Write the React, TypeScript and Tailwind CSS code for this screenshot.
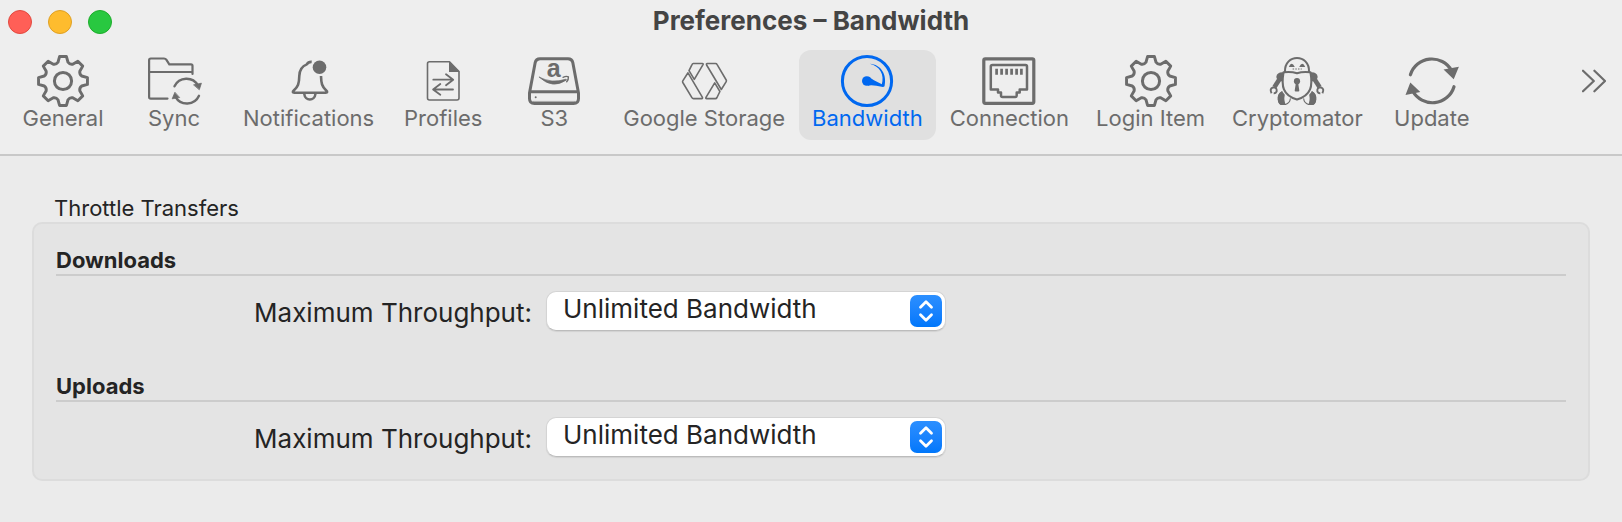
import React from "react";

type IconProps = { box: string; children: React.ReactNode };

function Icon({ box, children }: IconProps) {
  return (
    <svg
      viewBox={box}
      className="h-[54px] w-14"
      fill="none"
      stroke="currentColor"
      strokeWidth={2.6}
      strokeLinecap="round"
      strokeLinejoin="round"
      aria-hidden="true"
    >
      {children}
    </svg>
  );
}

function polar(radius: number, degrees: number) {
  const a = ((degrees - 90) * Math.PI) / 180;
  return `${(radius * Math.cos(a)).toFixed(2)} ${(radius * Math.sin(a)).toFixed(2)}`;
}

const gearPath =
  Array.from({ length: 8 }, (_, k) => {
    const a = k * 45;
    return `${k === 0 ? "M" : "L"}${polar(19.4, a - 15)} L${polar(24.7, a - 8)} L${polar(24.7, a + 8)} L${polar(19.4, a + 15)} Q${polar(17.6, a + 22.5)} ${polar(19.4, a + 30)}`;
  }).join(" ") + "Z";

const GearIcon = () => (
  <Icon box="-28 -27 56 54">
    <path d={gearPath} strokeWidth="2.9" />
    <circle r="8.6" strokeWidth="3" />
  </Icon>
);

const SyncIcon = () => (
  <Icon box="145.5 54 56 54">
    <path
      strokeWidth="2.2"
      d="M167 98.6H150.3Q148.6 98.6 148.6 97V60.2Q148.6 58.5 150.3 58.5H163.5Q165 58.5 165.8 59.7L168.8 64.3H190.5Q192 64.3 192 65.8V74M148.6 72H192"
    />
    <path strokeWidth="2.4" d="M174 86.3A13.2 13.2 0 0 1 197.5 85.5M198.5 95.8A13.2 13.2 0 0 1 175 96.8" />
    <path fill="currentColor" strokeWidth="0.8" d="M193.4 84.8L200.9 83.2L198.9 89.4ZM174.3 92.6L171.7 98.8L178.8 97.6Z" />
  </Icon>
);

const BellIcon = () => (
  <Icon box="280.5 54 56 54">
    <path
      strokeLinecap="butt"
      d="M311.2 61.9C308.5 61.7 307.2 62.8 306.3 64.4C301 66.4 299 70 298.8 76C298.6 84 297.5 86.5 293.5 90.2C291.8 91.8 292 92.7 293.8 92.7H325.2C327 92.7 327.2 91.8 325.5 90.2C321.5 86.5 320.7 83.5 320.5 76"
    />
    <path d="M303.8 94C304.5 101.4 314.2 101.4 314.9 94" />
    <circle cx="319" cy="67.3" r="6.8" fill="currentColor" stroke="none" />
  </Icon>
);

const ProfilesIcon = () => (
  <Icon box="416 54 56 54">
    <path strokeWidth="1.6" d="M450.5 61.7H430.5Q428.5 61.7 428.5 63.7V98Q428.5 100 430.5 100H458Q460 100 460 98V71.5Z" />
    <path fill="currentColor" stroke="none" d="M450 61.5V72H460.5Z" />
    <path strokeWidth="1.8" d="M434.3 79.7H454M447 74.3L454.2 79.7L447 85.3M454 89.5H434.3M441.3 84L434.1 89.5L441.3 94.8" />
  </Icon>
);

const DriveIcon = () => (
  <Icon box="527 54 56 54">
    <path
      strokeWidth="3"
      d="M536.2 62.5Q537 58.8 541 58.8H569Q573 58.8 573.8 62.5L579.5 93V98.5Q579.5 103.5 574.5 103.5H535.5Q530.5 103.5 530.5 98.5V93Z"
    />
    <path strokeWidth="3" d="M532 91.8H578" />
    <path strokeWidth="0.8" opacity="0.7" d="M534 101.4H576" />
    <circle cx="536.7" cy="97.3" r="1" fill="currentColor" stroke="none" />
    <text
      x="554.6"
      y="77"
      textAnchor="middle"
      fill="currentColor"
      stroke="none"
      className="font-['Liberation_Sans',sans-serif] text-[25px] font-bold"
    >
      a
    </text>
    <path fill="currentColor" strokeWidth="0.7" d="M540.3 77.2Q553.5 89.5 567 80.2Q568 79 566.5 79.3Q553 83.8 540.3 77.2Z" />
    <path strokeWidth="1.4" d="M564 77.3Q567.5 75.7 569.4 76.9Q569.7 79.4 567.7 81.8" />
  </Icon>
);

const GoogleStorageIcon = () => (
  <Icon box="677 54 56 54">
    <path
      strokeWidth="1.6"
      d="M694.2 63.5H703.4Q704.6 63.5 704 64.6L695.3 79.3L690 70.6L693 64.6Q693.5 63.5 694.2 63.5ZM689 72.8L703.3 97.2Q704 98.6 702.7 98.6H694.5Q693.5 98.6 692.9 97.6L683.8 82.5Q683.3 81.6 683.8 80.8ZM708.3 63.5H716.5Q717.5 63.5 718 64.4L727.2 80Q727.7 80.9 727.2 81.7L722.3 89.5L707.6 65Q707 63.5 708.3 63.5ZM715.7 82.9L720.9 91.5L718 97.5Q717.4 98.6 716.4 98.6H707.7Q706.3 98.6 707 97.4Z"
    />
  </Icon>
);

const GaugeIcon = () => (
  <Icon box="839.5 54 56 54">
    <circle cx="867.5" cy="81" r="24.6" strokeWidth="3" />
    <g fill="currentColor" stroke="none">
      <circle cx="867.3" cy="81" r="4.8" />
      <path d="M869.5 76.8Q872 79.3 884.4 85.3Q885.2 87.2 883.4 87.1Q873 84.6 868.3 85.7Z" />
      <path d="M870.3 63.8C881.5 64.5 887.8 74.5 885 86.6L882.2 84.9C885.2 74.5 880.5 66.5 870.3 63.8Z" />
    </g>
  </Icon>
);

const ConnectionIcon = () => (
  <Icon box="981 54 56 54">
    <rect x="983.8" y="58.8" width="50" height="44.5" rx="1.5" strokeWidth="3.2" />
    <path
      strokeWidth="2.5"
      d="M992.5 65H1025.5Q1027 65 1027 66.5V89.5H1019.7V92.6H1016.7V95.5Q1016.7 97 1015.2 97H1002.6Q1001 97 1001 95.5V92.6H998V89.5H990.8V66.5Q990.8 65 992.5 65Z"
    />
    <path strokeWidth="2.7" strokeLinecap="butt" d="M996.6 68.8V74.7M1001.6 68.8V74.7M1006.6 68.8V74.7M1011.6 68.8V74.7M1016.6 68.8V74.7M1021.4 68.8V74.7" />
  </Icon>
);

const RobotSide = () => (
  <g>
    <path fill="currentColor" stroke="none" d="M1283.5 72.5Q1276 71.5 1275.3 77L1276.5 80.5L1281.5 81.5Q1281.3 77 1283.5 72.5Z" />
    <path strokeWidth="4.6" strokeLinecap="butt" d="M1278.3 79.5L1273.5 87" />
    <path strokeWidth="1.9" strokeLinecap="butt" d="M1270.6 93.3Q1268.3 88.8 1272 87.3Q1276.3 87.3 1275.6 91.5Q1274.7 93.5 1272.7 93.3" />
    <path strokeWidth="1.1" d="M1281 91.8Q1276.7 94 1277.3 99.5Q1277.8 104.5 1281 104.5H1284.5Q1289 103 1289.3 98.8" />
    <path fill="currentColor" stroke="none" d="M1281 91.3Q1276.3 94 1276.8 100Q1277.4 105 1281 105H1285Q1282.5 101 1283.8 94.8Z" />
  </g>
);

const RobotIcon = () => (
  <Icon box="1268 54 56 54">
    <path strokeWidth="2.1" d="M1284 71.5C1283.5 53.5 1308.5 53.5 1308 71.5" />
    <path fill="currentColor" stroke="none" d="M1287.8 67Q1290.5 60.5 1293.8 67ZM1298.2 67Q1301.5 60.5 1304.2 67Z" />
    <path strokeWidth="1.2" strokeLinecap="butt" strokeDasharray="1.5 1.2" d="M1291.6 69H1300.8" />
    <path
      strokeWidth="2.1"
      d="M1282.5 72.3Q1290 71.3 1296 73.2Q1302 71.3 1309.5 72.3C1311.8 86 1310.5 95 1296 99.6C1281.5 95 1280.2 86 1282.5 72.3Z"
    />
    <circle cx="1296" cy="81.2" r="3.1" fill="currentColor" stroke="none" />
    <path fill="currentColor" stroke="none" d="M1295 82H1297L1298.3 90.5Q1298.3 91.5 1297.3 91.5H1294.7Q1293.7 91.5 1293.7 90.5Z" />
    <RobotSide />
    <g transform="translate(2592 0) scale(-1 1)">
      <RobotSide />
    </g>
  </Icon>
);

const UpdateIcon = () => (
  <Icon box="1403 54 56 54">
    <path strokeWidth="3.2" d="M1409.4 74.8A22.5 22.5 0 0 1 1450.5 70.5M1453 86.7A22.5 22.5 0 0 1 1411.7 91" />
    <path fill="currentColor" stroke="none" d="M1442.5 69.5L1457.9 66.8L1452.7 79.3ZM1409.3 82.5L1404.5 95L1419.3 92Z" />
  </Icon>
);

const tabs = [
  { label: "General", icon: <GearIcon /> },
  { label: "Sync", icon: <SyncIcon /> },
  { label: "Notifications", icon: <BellIcon /> },
  { label: "Profiles", icon: <ProfilesIcon /> },
  { label: "S3", icon: <DriveIcon /> },
  { label: "Google Storage", icon: <GoogleStorageIcon /> },
  { label: "Bandwidth", icon: <GaugeIcon /> },
  { label: "Connection", icon: <ConnectionIcon /> },
  { label: "Login Item", icon: <GearIcon /> },
  { label: "Cryptomator", icon: <RobotIcon /> },
  { label: "Update", icon: <UpdateIcon /> },
];

function ThroughputGroup({ title, id }: { title: string; id: string }) {
  return (
    <section>
      <h3 className="border-b-2 border-[#cccccc] text-[22px] leading-7 font-bold">{title}</h3>
      <div className="flex items-center gap-[14px] pt-[15px]">
        <label htmlFor={id} className="w-[476px] pt-1 text-right text-[26px] leading-9">
          Maximum Throughput:
        </label>
        <div className="relative w-[400px]">
          <select
            id={id}
            className="block h-10 w-full appearance-none rounded-[10px] border border-[#d4d4d4] border-b-[#bcbcbc] bg-white pr-10 pb-1 pl-4 text-[26px] leading-8 shadow-[0_1px_1px_rgba(0,0,0,0.08)]"
          >
            <option>Unlimited Bandwidth</option>
          </select>
          <span className="pointer-events-none absolute top-1 right-1 flex h-8 w-8 items-center justify-center rounded-[7px] bg-linear-to-b from-[#2b8fff] to-[#0077fb]">
            <svg viewBox="0 0 32 32" className="h-8 w-8" fill="none" stroke="white" strokeWidth="2.8" strokeLinecap="round" strokeLinejoin="round" aria-hidden="true">
              <path d="M10.5 12.3L16 6.8L21.5 12.3M10.5 19.7L16 25.2L21.5 19.7" />
            </svg>
          </span>
        </div>
      </div>
    </section>
  );
}

export default function App() {
  return (
    <div className="min-h-screen bg-[#ebebeb] font-[Inter,sans-serif] text-[#242424]">
      <header className="border-b-2 border-[#c8c8c8] bg-[#eeeeee] pb-[14px]">
        <div className="grid grid-cols-[1fr_auto_1fr] items-center px-2 pt-1">
          <div className="flex gap-4">
            <button aria-label="Close" className="size-6 rounded-full border border-[#e2493f] bg-[#ff5f57]" />
            <button aria-label="Minimize" className="size-6 rounded-full border border-[#dfa023] bg-[#febc2e]" />
            <button aria-label="Zoom" className="size-6 rounded-full border border-[#1dad2b] bg-[#28c840]" />
          </div>
          <h1 className="pb-[2px] text-[26px] leading-[34px] font-bold text-[#444444]">Preferences – Bandwidth</h1>
        </div>
        <div className="flex items-start justify-between pt-[10px] pr-4 pl-2">
          <nav className="flex gap-px">
            {tabs.map(({ label, icon }) => {
              const active = label === "Bandwidth";
              return (
                <button
                  key={label}
                  aria-pressed={active}
                  className={`flex h-[90px] min-w-[110px] flex-col items-center rounded-xl px-[13px] pt-1 text-[22px] leading-5 whitespace-nowrap ${
                    active ? "bg-[#e0e0e0] text-[#0068f0]" : "text-[#6c6c6c]"
                  }`}
                >
                  {icon}
                  {label}
                </button>
              );
            })}
          </nav>
          <button aria-label="More panes" className="pt-[19px] text-[#6c6c6c]">
            <svg viewBox="0 0 24 24" className="size-6" fill="none" stroke="currentColor" strokeWidth="2.2" strokeLinecap="round" strokeLinejoin="round" aria-hidden="true">
              <path d="M1 1.7L11.8 12L1 22.3M12.4 1.7L23 12L12.4 22.3" />
            </svg>
          </button>
        </div>
      </header>
      <main className="px-8 pt-[38px]">
        <h2 className="px-[22px] text-[22px] leading-7">Throttle Transfers</h2>
        <div className="flex flex-col gap-[41px] rounded-[10px] border-2 border-[#dcdcdc] bg-[#e4e4e4] px-[22px] pt-[22px] pb-[22px]">
          <ThroughputGroup title="Downloads" id="download-throughput" />
          <ThroughputGroup title="Uploads" id="upload-throughput" />
        </div>
      </main>
    </div>
  );
}
